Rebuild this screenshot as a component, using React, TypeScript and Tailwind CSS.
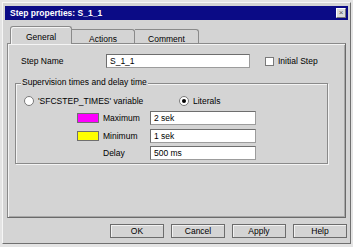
import React from 'react';

const Field: React.FC<{ value: string; className?: string }> = ({ value, className }) => (
  <div
    className={`h-[14px] bg-white border border-t-[#6e6e6e] border-l-[#6e6e6e] border-r-[#9c9c9c] border-b-[#9c9c9c] pl-[3px] flex items-center leading-none ${className ?? ''}`}
  >
    {value}
  </div>
);

const Radio: React.FC<{ checked?: boolean }> = ({ checked }) => (
  <div className="w-[10px] h-[10px] rounded-full bg-white border border-[#7a7a7a] flex items-center justify-center shrink-0">
    {checked && <div className="w-[4px] h-[4px] rounded-full bg-black" />}
  </div>
);

const Button: React.FC<{ label: string }> = ({ label }) => (
  <div className="w-[54px] h-[14px] border border-[#6c6c6c] shadow-[inset_1px_1px_0_#f2f2f2] flex items-center justify-center leading-none">
    {label}
  </div>
);

const TimeRow: React.FC<{ swatch?: string; label: string; value: string; className?: string }> = ({
  swatch,
  label,
  value,
  className,
}) => (
  <div className={`flex items-center h-[14px] ${className ?? ''}`}>
    <div className="ml-[61px] w-[22px] h-[10px] shrink-0">
      {swatch && <div className={`w-full h-full border border-[#6f6f6f] ${swatch}`} />}
    </div>
    <span className="ml-[4px] w-[47px]">{label}</span>
    <Field value={value} className="w-[106px]" />
  </div>
);

export default function App() {
  return (
    <div className="w-[353px] h-[247px] bg-[#e4e4e4] p-[2px] font-['Liberation_Sans',Arial,sans-serif] text-[8.5px] text-black">
      <div className="w-[349px] h-[242px] bg-[#d4d4d4] border border-t-[#f6f6f6] border-l-[#f6f6f6] border-r-[#707070] border-b-[#707070] flex flex-col">
        {/* title bar */}
        <div className="mx-[2px] mt-[3px] h-[14px] bg-[#0b0b86] flex items-center justify-between">
          <span className="pl-[5px] text-white font-bold leading-none">Step properties: S_1_1</span>
          <div className="mr-[2px] w-[10px] h-[10px] bg-[#dcdcdc] border border-t-white border-l-white border-r-[#777] border-b-[#777] flex items-center justify-center text-[8px] leading-none text-[#555]">
            ×
          </div>
        </div>

        {/* tabs */}
        <div className="mt-[6px] ml-[7px] h-[17px] flex items-end">
          <div className="relative z-10 -mb-px w-[62px] h-[18px] bg-[#d4d4d4] border border-b-0 border-[#8a8a8a] rounded-t-[3px] shadow-[inset_1px_1px_0_#f4f4f4] flex justify-center pt-[4px]">
            General
          </div>
          <div className="w-[63px] h-[14px] border border-b-0 border-l-0 border-[#8a8a8a] rounded-tr-[3px] flex justify-center pt-[3px]">
            Actions
          </div>
          <div className="w-[64px] h-[14px] border border-b-0 border-l-0 border-[#8a8a8a] rounded-tr-[3px] flex justify-center pt-[3px]">
            Comment
          </div>
        </div>

        {/* tab panel */}
        <div className="mx-[4px] h-[175px] border border-[#8a8a8a] border-r-[#6a6a6a] border-b-[#6a6a6a] shadow-[inset_1px_1px_0_#f4f4f4,inset_-1px_-1px_0_#a8a8a8] flex flex-col">
          <div className="mt-[10px] h-[14px] flex items-center">
            <span className="pl-[13px] w-[98px] shrink-0">Step Name</span>
            <Field value="S_1_1" className="w-[144px]" />
            <div className="ml-[15px] w-[9px] h-[9px] bg-white border border-[#7a7a7a]" />
            <span className="ml-[4px]">Initial Step</span>
          </div>

          <div className="relative ml-[7px] mt-[15px] w-[313px] h-[81px] border border-[#8a8a8a] shadow-[1px_1px_0_#f4f4f4,inset_1px_1px_0_#f4f4f4] flex flex-col">
            <span className="absolute left-[5px] -top-[6px] px-[1px] bg-[#d4d4d4] leading-none">
              Supervision times and delay time
            </span>
            <div className="mt-[12px] h-[10px] flex items-center">
              <div className="ml-[8px] w-[155px] flex items-center">
                <Radio />
                <span className="ml-[4px] leading-none">'SFCSTEP_TIMES' variable</span>
              </div>
              <Radio checked />
              <span className="ml-[4px] leading-none">Literals</span>
            </div>
            <TimeRow className="mt-[5px]" swatch="bg-[#ff00ff]" label="Maximum" value="2 sek" />
            <TimeRow className="mt-[4px]" swatch="bg-[#ffff00]" label="Minimum" value="1 sek" />
            <TimeRow className="mt-[3px]" label="Delay" value="500 ms" />
          </div>
        </div>

        {/* buttons */}
        <div className="mt-[6px] mr-[3px] flex justify-end gap-[7px]">
          <Button label="OK" />
          <Button label="Cancel" />
          <Button label="Apply" />
          <Button label="Help" />
        </div>
      </div>
    </div>
  );
}
